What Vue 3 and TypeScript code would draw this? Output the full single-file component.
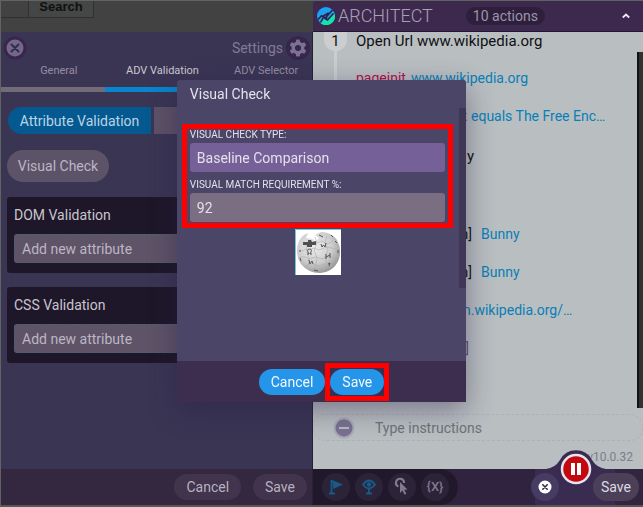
<script setup lang="ts">
import { ref } from 'vue'

interface Step {
  lead?: string
  link?: string
  accent?: string
  size: 'tall' | 'normal'
  wide?: boolean
}

const tabs = ['General', 'ADV Validation', 'ADV Selector']
const activeTab = ref('ADV Validation')
const sections = ['DOM Validation', 'CSS Validation']
const checkType = ref('Baseline Comparison')
const matchPercent = ref('92')
const instruction = ref('')

const steps: Step[] = [
  { lead: 't', link: 'equals The Free Enc…', accent: 'blue', size: 'normal' },
  { lead: 'y', size: 'tall' },
  { size: 'normal' },
  { lead: 'n]', link: 'Bunny', size: 'normal', wide: true },
  { lead: 'n]', link: 'Bunny', size: 'normal', wide: true },
  { link: 'n.wikipedia.org/…', size: 'normal' },
  { lead: ']', accent: 'violet', size: 'normal' },
]
</script>

<template>
  <div class="app">
    <div class="left">
      <div class="site">
        <span class="site-input"></span>
        <button class="site-search" type="button">Search</button>
      </div>

      <section class="settings">
        <header class="settings-head">
          <button class="round-close" type="button" aria-label="Close">
            <svg viewBox="0 0 24 24" width="24" height="24">
              <circle cx="12" cy="12" r="10" fill="#74688a" stroke="#38264f" stroke-width="3" />
              <path d="M8.5 8.5l7 7M15.5 8.5l-7 7" stroke="#352b4b" stroke-width="2" stroke-linecap="round" />
            </svg>
          </button>
          <div class="settings-title">
            <span>Settings</span>
            <svg viewBox="0 0 24 24" width="24" height="24">
              <circle cx="12" cy="12" r="12" fill="#36264d" />
              <g fill="#7c7191">
                <rect x="10" y="3.5" width="4" height="17" rx="1" />
                <rect x="10" y="3.5" width="4" height="17" rx="1" transform="rotate(60 12 12)" />
                <rect x="10" y="3.5" width="4" height="17" rx="1" transform="rotate(120 12 12)" />
                <circle cx="12" cy="12" r="6.4" />
              </g>
              <circle cx="12" cy="12" r="3" fill="#36264d" />
            </svg>
          </div>
        </header>

        <nav class="tabs">
          <button
            v-for="tab in tabs"
            :key="tab"
            type="button"
            :class="['tab', { active: tab === activeTab }]"
            @click="activeTab = tab"
          >{{ tab }}</button>
        </nav>

        <div class="settings-body">
          <div class="segments">
            <button class="segment on" type="button">Attribute Validation</button>
            <button class="segment" type="button" aria-label="Other validation"></button>
          </div>
          <button class="visual-pill" type="button">Visual Check</button>
          <div v-for="name in sections" :key="name" class="card">
            <h3>{{ name }}</h3>
            <button class="add" type="button">Add new attribute</button>
          </div>
        </div>

        <footer class="settings-foot">
          <button class="pill" type="button">Cancel</button>
          <button class="pill" type="button">Save</button>
        </footer>
      </section>
    </div>

    <section class="architect">
      <header class="arch-head">
        <svg class="logo" viewBox="0 0 18 18" width="18" height="18">
          <circle cx="9" cy="9" r="9" fill="#1aa3f5" />
          <path d="M18 8A9 9 0 0 1 3.500 16.200L7 12.500l3.500 1.500L16 7z" fill="#14e3ae" />
          <path d="M1 12.500L4.500 8.800 8 11.200 15.500 3M3.500 15.500L7.500 8.500M9 13l1.500-6.500L5.500 9.500M10 13.500L16.500 6.500" fill="none" stroke="#30203f" stroke-width="1.500" />
        </svg>
        <h1>ARCHITECT</h1>
        <span class="count">10 actions</span>
        <button class="collapse" type="button" aria-label="Collapse">
          <svg viewBox="0 0 10 8" width="10" height="8"><path d="M1.8 5.5L5 2.5l3.2 3" fill="none" stroke="#eeeaf2" stroke-width="1.8" /></svg>
        </button>
      </header>

      <div class="arch-main">
        <div class="scroller"></div>
        <div class="first-step">
          <span class="number">1</span>
          <span>Open Url www.wikipedia.org</span>
        </div>
        <div class="event">
          <span class="node"></span>
          <span class="event-name">pageinit</span>
          <a href="#">www.wikipedia.org</a>
        </div>
        <div class="steps">
          <div v-for="(s, i) in steps" :key="i" :class="['step', s.size, { wide: s.wide, url: s.link && !s.lead }]">
            <span v-if="!s.link || s.lead" :class="['lead', s.accent]">{{ s.lead }}</span>
            <a v-if="s.link" href="#">{{ s.link }}</a>
          </div>
        </div>
        <div class="compose">
          <svg viewBox="0 0 22 22" width="22" height="22">
            <circle cx="11" cy="11" r="9.5" fill="#797290" stroke="#aaa8b6" stroke-width="2" />
            <path d="M6 11h10" stroke="#bdb9c6" stroke-width="2" />
          </svg>
          <input v-model="instruction" type="text" placeholder="Type instructions" aria-label="Type instructions" />
        </div>
        <div class="version">v10.0.32</div>
      </div>

      <footer class="arch-foot">
        <div class="tools">
          <button class="tool" type="button" aria-label="Flag">
            <svg viewBox="0 0 28 28" width="28" height="28"><path d="M10 7l11 4.5-9.500 4.500z" fill="#185a88" /><path d="M9.500 7v13.500M7 20.500h6" stroke="#185a88" stroke-width="1.800" /></svg>
          </button>
          <button class="tool" type="button" aria-label="Watch">
            <svg viewBox="0 0 28 28" width="28" height="28">
              <path d="M8 11.500q6-8 12 0-6 8-12 0z" fill="none" stroke="#185a88" stroke-width="1.800" />
              <circle cx="14" cy="11.500" r="2.200" fill="#185a88" /><path d="M14 15v5.500M11 20.500h6" stroke="#185a88" stroke-width="1.800" />
            </svg>
          </button>
          <button class="tool" type="button" aria-label="Click">
            <svg viewBox="0 0 28 28" width="28" height="28">
              <path d="M10.500 13.500A4 4 0 1 1 16 10" fill="none" stroke="#82798e" stroke-width="2.200" />
              <path d="M12 9l7.500 7.500-3.200.3 2 4-1.800.9-2-4.100L12 20z" fill="#82798e" />
            </svg>
          </button>
          <button class="tool text" type="button">{X}</button>
        </div>
        <svg class="bump" viewBox="0 0 60 20" width="60" height="20">
          <path d="M0 19Q9 18 14 10A18 18 0 0 1 46 10Q51 18 60 19V20H0z" fill="#3a2b50" />
        </svg>
        <div class="right-tools">
          <button class="cancel-round" type="button" aria-label="Discard">
            <svg viewBox="0 0 14 14" width="14" height="14"><circle cx="7" cy="7" r="6.500" fill="#fff" /><path d="M4.800 4.800l4.400 4.400M9.200 4.800L4.800 9.200" stroke="#30284a" stroke-width="1.600" stroke-linecap="round" /></svg>
          </button>
          <button class="save-light" type="button">Save</button>
        </div>
        <button class="pause" type="button" aria-label="Pause recording">
          <svg viewBox="0 0 34 34" width="34" height="34">
            <circle cx="17" cy="17" r="17" fill="#3a2b50" />
            <circle cx="17" cy="17" r="14" fill="#c50710" stroke="#e5e4ef" stroke-width="2.500" />
            <rect x="12" y="11" width="4" height="12" fill="#fff" /><rect x="18" y="11" width="4" height="12" fill="#fff" />
          </svg>
        </button>
      </footer>
    </section>

    <div class="overlay">
      <form class="modal" role="dialog" aria-labelledby="dlg" @submit.prevent>
        <h2 id="dlg">Visual Check</h2>
        <div class="modal-body">
          <div class="modal-content">
            <div class="fields">
              <label for="type">VISUAL CHECK TYPE:</label>
              <select id="type" v-model="checkType"><option>Baseline Comparison</option></select>
              <label for="match">VISUAL MATCH REQUIREMENT %:</label>
              <input id="match" v-model="matchPercent" type="text" />
            </div>
            <svg class="globe" viewBox="0 0 46 46" width="46" height="46" role="img" aria-label="Baseline image">
              <defs><radialGradient id="ball" cx=".4" cy=".35" r=".7"><stop offset="0" stop-color="#eee" /><stop offset=".6" stop-color="#ccc" /><stop offset="1" stop-color="#929292" /></radialGradient></defs>
              <rect width="46" height="46" fill="#fff" /><path d="M.5 46V.5H46" fill="none" stroke="#70cadb" />
              <path d="M4 12Q7 6 13 4l-2 5 7 1 2 3 4-4-4-3 6-3q10 0 16 8 5 9 2 19-5 13-19 14Q13 44 6 35-1 24 4 12z" fill="url(#ball)" />
              <path d="M8 13h5v-2h3l1 2 4-1v4h-4v2h-5v-2H8z" fill="#505050" />
              <path d="M4 21q5 2 6-1 4 2 9-1l5 2 8-3 9 2M3 29q7-3 10 1l8-2 6 2 7-3 8 2M10 37l7-2 7 2 8-2 5 1M11 16l1 7 2 7-1 8M20 8l2 6-3 7 3 8-2 11M32 7l-2 7 3 7-3 7 2 10M22 14l5-2 5 3 6-3" fill="none" stroke="#adadad" stroke-width=".6" />
              <path d="M12 25h2q-3-5 .5-5t.5 5h2M26 15l1 3 1.500-2 1.500 2 1-4M24 6l4 2M36 6l2 2M40 12l2 2M5 21v2M14 31l1 4 2-3 1 3M31 25v5M35 24v5M31 28l4-2M33 35l2-1-1 3M5 29l1 3M19 41l4 1M43 21v3" fill="none" stroke="#555" stroke-width="1" />
            </svg>
          </div>
          <div class="modal-track"></div>
        </div>
        <footer class="modal-foot">
          <button class="primary" type="button">Cancel</button>
          <span class="marked"><button class="primary" type="submit">Save</button></span>
        </footer>
      </form>
    </div>
  </div>
</template>

<style>
body { margin: 0; background: #424242; }
</style>

<style scoped>
* { box-sizing: border-box; }
.app {
  min-height: 100vh;
  display: grid;
  grid-template-columns: 312fr 330fr;
  border: 1px solid #626363;
  border-right: 0;
  border-bottom: 2px solid #565757;
  background: #424242;
  font: 14px/18px Roboto, "Liberation Sans", sans-serif;
  color: #bbb6c3;
}
button, input, select { font: inherit; color: inherit; border: 0; margin: 0; padding: 0; background: none; }
h1, h2, h3 { margin: 0; font-weight: 400; }
a { color: #087fb7; text-decoration: none; }
svg { display: block; flex: none; }
.left { display: flex; flex-direction: column; }
.site { height: 31px; display: flex; align-items: flex-start; }
.site-input { width: 28px; height: 17px; border: solid #303030; border-width: 0 1px 1px 0; }
.site-search { width: 65px; height: 17px; padding-bottom: 12px; border: solid #303030; border-width: 0 1px 1px 0; background: #454646; color: #101010; font: 700 13px/12px "Liberation Sans", sans-serif; }
.settings { flex: 1; display: flex; flex-direction: column; background: #3b3554; border-right: 1px solid #272039; }
.settings-head { display: flex; justify-content: space-between; align-items: center; height: 32px; padding: 0 2px; color: #827a96; }
.settings-title { display: flex; align-items: center; gap: 3px; }
.tabs { display: grid; grid-template-columns: repeat(3, 1fr); height: 28px; }
.tab { height: 28px; padding: 0 0 9px 12px; border-bottom: 5px solid #716b7a; font-size: 11px; line-height: 14px; color: #958da3; }
.tab.active { border-color: #0785ce; color: #cbc8d2; }
.settings-body { flex: 1; display: flex; flex-direction: column; align-items: stretch; padding: 15px 6px 0; }
.segments { display: grid; grid-template-columns: 143px 1fr; gap: 3px; height: 27px; padding-left: 1px; }
.segment { background: #5d5267; border-radius: 0 14px 14px 0; color: #bad4e5; }
.segment.on { background: #045990; border-radius: 14px 0 0 14px; }
.visual-pill { width: 102px; height: 32px; margin: 16px 0 15px; border-radius: 16px; background: #5d5368; align-self: flex-start; }
.card { background: #1e1729; border-radius: 3px; padding: 9px 7px 10px; margin-bottom: 14px; }
.card h3 { font-size: 14px; line-height: 18px; margin-bottom: 10px; color: #c9c5cd; }
.add { width: 100%; height: 29px; padding: 0 7px; text-align: left; background: #5e5367; border: 1px dashed #4c6174; border-radius: 3px; }
.settings-foot { height: 36px; background: #33283f; display: flex; justify-content: flex-end; align-items: center; gap: 12px; padding-right: 5px; }
.pill { height: 26px; padding: 0 12px; border-radius: 13px; background: #41344c; color: #b8b1c0; }

.architect { display: flex; flex-direction: column; min-width: 0; }
.arch-head { height: 31px; display: flex; align-items: center; padding: 0 12px 0 4px; background: #3d294d; border-bottom: 1px solid #211735; border-radius: 3px 0 0 0; }
.arch-head h1 { font-size: 18px; font-weight: 300; line-height: 24px; color: #aaa0b6; margin-left: 3px; }
.count { margin-left: 33px; padding: 0 7px; height: 18px; border-radius: 9px; background: #2e203d; color: #9e94aa; }
.collapse { margin-left: auto; }
.arch-main { position: relative; flex: 1; display: flex; flex-direction: column; background: #b9bec1; color: #101012; }
.scroller { position: absolute; right: 0; top: 20px; bottom: 61px; width: 6px; background: #303232; border-left: 2px solid #121314; }
.first-step { display: flex; align-items: flex-start; height: 27px; gap: 9px; font-size: 15px; line-height: 18px; padding-left: 11px; }
.number { width: 23px; height: 19px; border-radius: 0 0 12px 12px; background: #cbcdcf; text-align: center; }
.event { display: flex; gap: 5px; height: 38px; padding-left: 21px; line-height: 38px; position: relative; }
.node { position: absolute; left: 21px; top: -8px; width: 3px; height: 46px; background: #cbcdcf; }
.event-name { margin-left: 22px; color: #b60c47; }
.steps { flex: 1; }
.step { display: flex; gap: 4px; height: 38px; line-height: 38px; }
.step.tall { height: 42px; line-height: 42px; font-size: 15px; }
.step.tall .lead { width: 161px; }
.step.wide { gap: 9px; }
.step.wide .lead { width: 159px; }
.step.url { padding-left: 150px; }
.lead { width: 154px; text-align: right; }
.lead.blue { color: #087fb7; }
.lead.violet { color: #5d5477; width: 156px; }
.compose { display: flex; align-items: center; gap: 20px; height: 27px; margin-bottom: 7px; padding-left: 20px; border: 1px dashed #aeb2b7; border-left: 0; border-radius: 13px; }
.compose input { flex: 1; min-width: 0; }
.compose input::placeholder { color: #6e7277; opacity: 1; }
.version { height: 21px; padding-right: 10px; line-height: 18px; text-align: right; color: #7e7c8b; font-size: 12px; }
.arch-foot { height: 36px; position: relative; display: flex; justify-content: space-between; background: linear-gradient(90deg, #30233f 0 222px, #3a2b50 222px 302px, #32253f 302px); }
.tools { display: flex; align-items: center; gap: 5px; padding: 0 9px; background: #21192b; border-radius: 0 18px 18px 0; }
.tool { width: 28px; height: 28px; border-radius: 50%; background: #2b2338; }
.tool.text { font-weight: 500; font-size: 13px; color: #82798e; }
.right-tools { display: flex; align-items: center; gap: 34px; padding-right: 4px; }
.cancel-round { width: 28px; height: 28px; display: grid; place-items: center; border-radius: 50%; background: #463b63; }
.save-light { height: 28px; padding: 0 8px; border-radius: 14px; background: #4c4059; color: #dedae4; }
.bump { position: absolute; right: 37px; bottom: 35px; }
.pause { position: absolute; right: 50px; bottom: 19px; }

.overlay { position: fixed; inset: 0 0 25px; display: flex; align-items: center; justify-content: center; }
.modal { width: 45%; min-width: 289px; background: #4b4568; box-shadow: 0 8px 28px #251e4270; border-radius: 3px 3px 0 0; color: #e4e1eb; }
.modal h2 { padding: 5px 13px; font-size: 14px; line-height: 18px; }
.modal-body { display: flex; height: 253px; }
.modal-content { flex: 1; display: flex; flex-direction: column; align-items: center; padding: 16px 6px 0 5px; }
.fields { align-self: stretch; border: 5px solid #fe0000; padding: 0 3px 1px; display: flex; flex-direction: column; }
.fields label { font-size: 10px; line-height: 12px; margin-bottom: 2px; }
.fields select, .fields input { width: 100%; height: 29px; padding: 0 7px; border-radius: 3px; }
.fields select { appearance: none; background: #756198; margin-bottom: 7px; }
.fields option { color: #221a2d; }
.fields input { background: #7b6d82; }
.globe { margin-top: 1px; }
.modal-track { width: 7px; height: 180px; background: #403756; }
.modal-foot { display: flex; align-items: center; justify-content: center; height: 41px; padding-left: 5px; background: #3d2e50; }
.primary { height: 26px; padding: 0 12px; border-radius: 13px; background: #2495e8; color: #f4f8fd; }
.marked { height: 38px; padding: 1px 0; border: 5px solid #fe0000; }
</style>
